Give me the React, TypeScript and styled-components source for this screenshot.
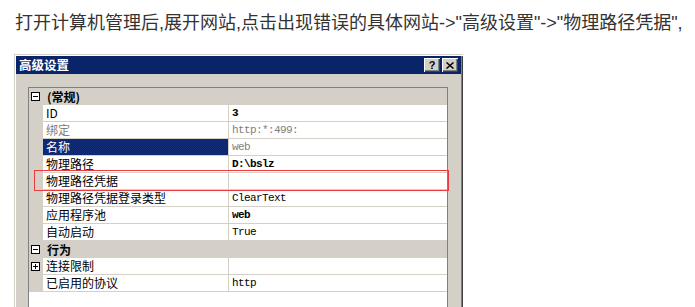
import React from "react";
import styled, { createGlobalStyle } from "styled-components";

const Global = createGlobalStyle`
  html, body { margin: 0; padding: 0; background: #fff; overflow: hidden; }
  body { width: 695px; height: 307px; }
`;

const Page = styled.div`
  display: flex;
  flex-direction: column;
  height: 307px;
`;

const Intro = styled.p`
  margin: 0;
  padding: 11px 0 0 15px;
  height: 54px;
  flex-shrink: 0;
  box-sizing: border-box;
  font-family: "Liberation Sans", "Noto Sans CJK SC", sans-serif;
  font-size: 18px;
  line-height: 24px;
  color: #333;
  white-space: nowrap;
`;

const Window = styled.div`
  margin-left: 14px;
  width: 449px;
  height: 262px;
  flex-shrink: 0;
  box-sizing: border-box;
  background: #d4d0c8;
  padding: 2px;
  box-shadow: inset 1px 1px 0 #d4d0c8, inset 2px 2px 0 #fff, inset -1px 0 0 #404040, inset -2px 0 0 #808080;
  display: flex;
  flex-direction: column;
`;

const TitleBar = styled.div`
  height: 18px;
  background: #0a246a;
  display: flex;
  align-items: center;
  padding: 0 3px 0 3px;
  flex-shrink: 0;
`;

const Title = styled.span`
  flex: 1;
  color: #fff;
  font-family: "Noto Sans CJK SC", sans-serif;
  font-weight: bold;
  font-size: 12.5px;
  line-height: 18px;
`;

const TitleButton = styled.button<{ $gap?: number }>`
  width: 16px;
  height: 14px;
  padding: 0;
  margin-left: ${(p) => p.$gap ?? 0}px;
  border: none;
  background: #d4d0c8;
  box-shadow: inset 1px 1px 0 #fff, inset -1px -1px 0 #404040, inset -2px -2px 0 #808080;
  display: flex;
  align-items: center;
  justify-content: center;
  font-family: "Liberation Sans", sans-serif;
  font-weight: bold;
  font-size: 11px;
  line-height: 14px;
  color: #000;
`;

const Body = styled.div`
  position: relative;
  flex: 1;
  padding: 13px 13px 0 12px;
  display: flex;
  flex-direction: column;
`;

const Grid = styled.div`
  flex: 1;
  background: #fff;
  border-top: 1px solid #808080;
  border-left: 1px solid #808080;
  border-right: 1px solid #808080;
  display: flex;
  flex-direction: column;
`;

const Row = styled.div<{ $category?: boolean }>`
  display: flex;
  height: 17px;
  flex-shrink: 0;
  background: ${(p) => (p.$category ? "#d4d0c8" : "#fff")};
`;

const Gutter = styled.div`
  width: 14px;
  flex-shrink: 0;
  background: #d4d0c8;
  display: flex;
  align-items: center;
  padding-left: 2px;
  box-sizing: border-box;
`;

const Label = styled.div<{ $dim?: boolean; $selected?: boolean }>`
  width: 186px;
  flex-shrink: 0;
  box-sizing: border-box;
  border-right: 1px solid #d4d0c8;
  border-bottom: 1px solid #d4d0c8;
  padding-left: 3px;
  font-family: "Noto Sans CJK SC", sans-serif;
  font-size: 12px;
  line-height: 16px;
  white-space: nowrap;
  overflow: hidden;
  color: ${(p) => (p.$selected ? "#fff" : p.$dim ? "#808080" : "#000")};
  background: ${(p) =>
    p.$selected
      ? "repeating-conic-gradient(#0a246a 0% 25%, #142e78 0% 50%) 0 0 / 2px 2px"
      : "transparent"};
`;

const CategoryLabel = styled.div`
  flex: 1;
  padding-left: 4px;
  font-family: "Noto Sans CJK SC", sans-serif;
  font-weight: bold;
  font-size: 12px;
  line-height: 17px;
  color: #000;
`;

const Value = styled.div<{ $dim?: boolean; $bold?: boolean }>`
  flex: 1;
  box-sizing: border-box;
  border-bottom: 1px solid #d4d0c8;
  padding-left: 3px;
  font-family: "Liberation Mono", monospace;
  font-size: 11px;
  letter-spacing: -0.6px;
  line-height: 16px;
  font-weight: ${(p) => (p.$bold ? "bold" : "normal")};
  color: ${(p) => (p.$dim ? "#808080" : "#000")};
  white-space: nowrap;
`;

const Highlight = styled.div`
  position: absolute;
  left: 18px;
  top: 96px;
  width: 415px;
  height: 21px;
  border: 1px solid #ec3a3f;
  box-sizing: border-box;
  pointer-events: none;
`;

const ToggleBox = ({ plus }: { plus?: boolean }) => (
  <svg width="9" height="9" viewBox="0 0 9 9">
    <rect x="0.5" y="0.5" width="8" height="8" fill="#fff" stroke="#000" />
    <line x1="2" y1="4.5" x2="7" y2="4.5" stroke="#000" />
    {plus && <line x1="4.5" y1="2" x2="4.5" y2="7" stroke="#000" />}
  </svg>
);

type Prop = {
  label: string;
  value: string;
  dim?: boolean;
  bold?: boolean;
  selected?: boolean;
  valueDim?: boolean;
  expandable?: boolean;
};

const general: Prop[] = [
  { label: "ID", value: "3", bold: true },
  { label: "绑定", value: "http:*:499:", dim: true, valueDim: true },
  { label: "名称", value: "web", selected: true, valueDim: true },
  { label: "物理路径", value: "D:\\bslz", bold: true },
  { label: "物理路径凭据", value: "" },
  { label: "物理路径凭据登录类型", value: "ClearText" },
  { label: "应用程序池", value: "web", bold: true },
  { label: "自动启动", value: "True" },
];

const behavior: Prop[] = [
  { label: "连接限制", value: "", expandable: true },
  { label: "已启用的协议", value: "http" },
];

const PropRow = ({ p }: { p: Prop }) => (
  <Row>
    <Gutter>{p.expandable && <ToggleBox plus />}</Gutter>
    <Label $dim={p.dim} $selected={p.selected}>
      {p.label}
    </Label>
    <Value $dim={p.valueDim} $bold={p.bold}>
      {p.value}
    </Value>
  </Row>
);

const Category = ({ title }: { title: string }) => (
  <Row $category>
    <Gutter>
      <ToggleBox />
    </Gutter>
    <CategoryLabel>{title}</CategoryLabel>
  </Row>
);

export default function App() {
  return (
    <>
      <Global />
      <Page>
        <Intro>打开计算机管理后,展开网站,点击出现错误的具体网站-&gt;"高级设置"-&gt;"物理路径凭据",</Intro>
        <Window>
          <TitleBar>
            <Title>高级设置</Title>
            <TitleButton>?</TitleButton>
            <TitleButton $gap={2}>
              <svg width="8" height="7" viewBox="0 0 8 7">
                <path d="M0.5 0.5 L7.5 6.5 M7.5 0.5 L0.5 6.5" stroke="#000" strokeWidth="1.5" />
              </svg>
            </TitleButton>
          </TitleBar>
          <Body>
            <Grid>
              <Category title="(常规)" />
              {general.map((p) => (
                <PropRow key={p.label} p={p} />
              ))}
              <Category title="行为" />
              {behavior.map((p) => (
                <PropRow key={p.label} p={p} />
              ))}
            </Grid>
            <Highlight />
          </Body>
        </Window>
      </Page>
    </>
  );
}
